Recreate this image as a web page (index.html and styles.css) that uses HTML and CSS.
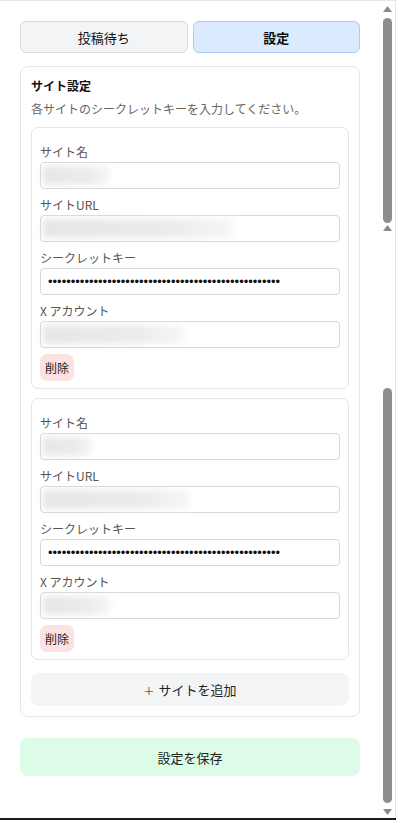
FILE: index.html
```html
<!DOCTYPE html>
<html lang="ja">
<head>
  <meta charset="UTF-8">
  <meta name="viewport" content="width=device-width, initial-scale=1.0">
  <title>設定</title>
  <link rel="stylesheet" href="styles.css">
</head>
<body>
  <div class="page">
    <main class="main">
      <div class="tabs">
        <button class="tab">投稿待ち</button>
        <button class="tab active">設定</button>
      </div>

      <section class="panel">
        <h2 class="panel-title">サイト設定</h2>
        <p class="panel-desc">各サイトのシークレットキーを入力してください。</p>

        <div class="site-list">
          <div class="site-card">
            <label class="field-label">サイト名</label>
            <div class="input-wrap">
              <input class="field-input" type="text">
              <span class="blur" style="width: 67px"></span>
            </div>
            <label class="field-label">サイトURL</label>
            <div class="input-wrap">
              <input class="field-input" type="text">
              <span class="blur" style="width: 190px"></span>
            </div>
            <label class="field-label">シークレットキー</label>
            <input class="field-input secret" type="password" value="xxxxxxxxxxxxxxxxxxxxxxxxxxxxxxxxxxxxxxxxxxxxxxxxxxx">
            <label class="field-label">X アカウント</label>
            <div class="input-wrap">
              <input class="field-input" type="text">
              <span class="blur" style="width: 140px"></span>
            </div>
            <button class="delete-btn">削除</button>
          </div>

          <div class="site-card">
            <label class="field-label">サイト名</label>
            <div class="input-wrap">
              <input class="field-input" type="text">
              <span class="blur" style="width: 49px"></span>
            </div>
            <label class="field-label">サイトURL</label>
            <div class="input-wrap">
              <input class="field-input" type="text">
              <span class="blur" style="width: 145px"></span>
            </div>
            <label class="field-label">シークレットキー</label>
            <input class="field-input secret" type="password" value="xxxxxxxxxxxxxxxxxxxxxxxxxxxxxxxxxxxxxxxxxxxxxxxxxxx">
            <label class="field-label">X アカウント</label>
            <div class="input-wrap">
              <input class="field-input" type="text">
              <span class="blur" style="width: 67px"></span>
            </div>
            <button class="delete-btn">削除</button>
          </div>
        </div>

        <button class="add-btn"><span class="plus">+</span>サイトを追加</button>
      </section>

      <button class="save-btn">設定を保存</button>
    </main>

    <div class="scrollbar">
      <svg class="arrow up" width="9" height="6" viewBox="0 0 9 6"><polygon points="4.5,0 9,6 0,6" fill="#8a8a8a"/></svg>
      <div class="thumb first"></div>
      <svg class="arrow up second" width="9" height="6" viewBox="0 0 9 6"><polygon points="4.5,0 9,6 0,6" fill="#8a8a8a"/></svg>
      <div class="thumb last"></div>
      <svg class="arrow down" width="9" height="6" viewBox="0 0 9 6"><polygon points="0,0 9,0 4.5,6" fill="#8a8a8a"/></svg>
    </div>
  </div>
</body>
</html>
```

FILE: styles.css
```css
body {
  margin: 0;
  font-family: "Noto Sans CJK JP", "Noto Sans", sans-serif;
  color: #111;
  background: #fff;
}
.page {
  display: flex;
  height: 820px;
  box-sizing: border-box;
  border-top: 1px solid #e6e6e6;
  border-bottom: 2px solid #1c1c1c;
}
.main {
  flex: 1;
  padding: 20px 20px 0;
}
button {
  font-family: inherit;
  font-weight: 400;
  cursor: pointer;
}
.tabs {
  display: grid;
  grid-template-columns: 1fr 1fr;
  gap: 5px;
}
.tab {
  height: 32px;
  border: 1px solid #d9dbe0;
  border-radius: 6px;
  background: #f3f4f6;
  color: #111;
  font-size: 13px;
}
.tab.active {
  background: #dbeafe;
  border-color: #a9cdf5;
  font-weight: 700;
}
.panel {
  margin-top: 13px;
  border: 1px solid #e3e5e8;
  border-radius: 8px;
  padding: 10px;
}
.panel-title {
  margin: 0;
  font-size: 12px;
  line-height: 18px;
  font-weight: 700;
}
.panel-desc {
  margin: 5px 0 0;
  font-size: 12px;
  line-height: 18px;
  color: #666;
}
.site-list {
  margin-top: 9px;
  display: flex;
  flex-direction: column;
  gap: 9px;
}
.site-card {
  border: 1px solid #e3e5e8;
  border-radius: 7px;
  padding: 14px 8px 7px;
  display: flex;
  flex-direction: column;
  align-items: flex-start;
}
.field-label {
  display: block;
  font-size: 12px;
  line-height: 20px;
  color: #555;
}
.field-label + .input-wrap,
.field-label + .field-input {
  margin-bottom: 6px;
}
.input-wrap {
  position: relative;
  width: 100%;
}
.field-input {
  display: block;
  width: 100%;
  height: 27px;
  box-sizing: border-box;
  border: 1px solid #d6d8dc;
  border-radius: 4px;
  padding: 0 7px;
  font-family: "Liberation Sans", sans-serif;
  font-size: 13px;
  color: #111;
  background: #fff;
}
.blur {
  position: absolute;
  left: 3px;
  top: 4px;
  bottom: 4px;
  background: linear-gradient(90deg, #e6e6e6, #ececec 70%, #f6f6f6);
  filter: blur(3px);
  border-radius: 2px;
}
.delete-btn {
  height: 27px;
  padding: 0 5px;
  border: none;
  border-radius: 7px;
  background: #fde2e2;
  color: #222;
  font-size: 12px;
}
.add-btn {
  display: block;
  width: 100%;
  height: 33px;
  margin-top: 13px;
  border: none;
  border-radius: 8px;
  background: #f3f4f6;
  color: #222;
  font-size: 13px;
}
.plus {
  font-family: "DejaVu Sans", sans-serif;
  font-weight: 300;
  margin-right: 4px;
}
.save-btn {
  display: block;
  width: 100%;
  height: 38px;
  margin-top: 21px;
  border: none;
  border-radius: 8px;
  background: #dcfce7;
  color: #222;
  font-size: 13px;
}
.scrollbar {
  width: 16px;
  box-sizing: border-box;
  border-right: 1px solid #e8e8e8;
  display: flex;
  flex-direction: column;
  align-items: center;
}
.arrow {
  display: block;
  flex: none;
}
.arrow.up {
  margin-top: 5px;
}
.arrow.up.second {
  margin-top: 2px;
}
.arrow.down {
  margin-top: 6px;
}
.thumb {
  width: 9px;
  flex: none;
  background: #8d8d8d;
  border-radius: 5px;
}
.thumb.first {
  margin-top: 6px;
  height: 205px;
}
.thumb.last {
  margin-top: 157px;
  height: 415px;
}
```
